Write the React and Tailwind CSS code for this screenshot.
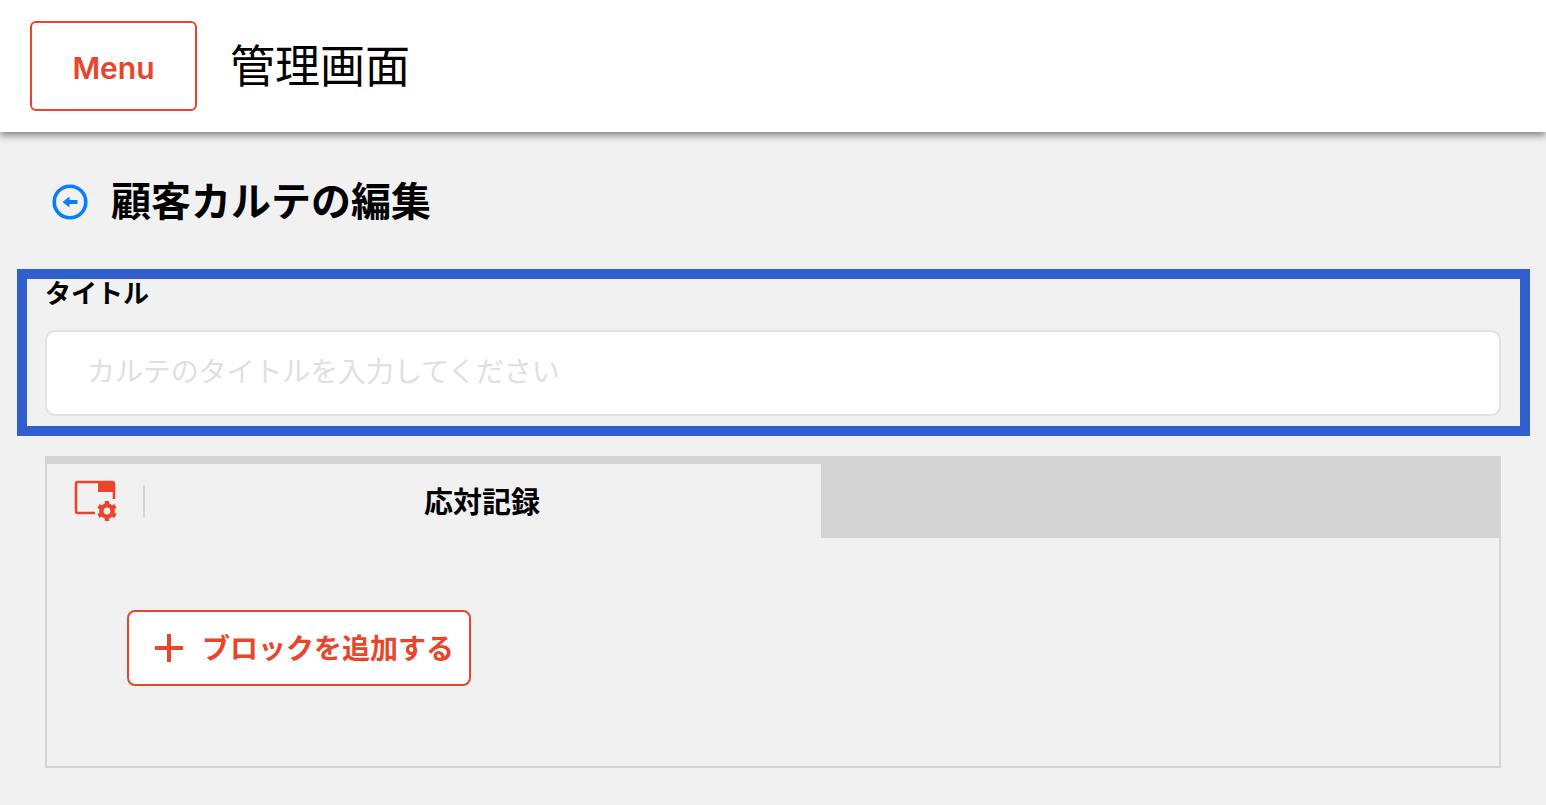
export default function App() {
  const jp = { fontFamily: '"Inter","Noto Sans CJK JP",sans-serif' };
  return (
    <div className="h-[805px] overflow-hidden bg-[#f1f1f1] text-black" style={jp}>
      <header className="relative flex h-[132px] items-center bg-white pl-[30px] shadow-[0_3px_8px_rgba(0,0,0,0.5)]">
        <button className="flex h-[90px] w-[167px] items-center justify-center rounded-[6px] border-2 border-[#e8452c] bg-white pt-[4px] text-[30px] font-semibold text-[#e8452c]">Menu</button>
        <h1 className="ml-[33px] text-[45px] font-normal leading-none">管理画面</h1>
      </header>
      <div className="flex h-[137px] items-center pl-[52px]">
        <svg width="36" height="36" viewBox="0 0 36 36" fill="none" className="mt-[2px] shrink-0">
          <circle cx="18" cy="18" r="15.8" stroke="#0a7cff" strokeWidth="3.6" />
          <path d="M10.5 18 L17.5 12.5 V16 H25.5 V20 H17.5 V23.5 Z" fill="#0a7cff" />
        </svg>
        <h2 className="ml-[23px] pt-[2px] text-[40px] font-bold leading-none">顧客カルテの編集</h2>
      </div>
      <section className="ml-[17px] h-[167px] w-[1513px] border-[10px] border-[#3160cc] pl-[18px] pr-[19px]">
        <label className="block text-[26px] font-bold leading-[30px]">タイトル</label>
        <div className="mt-[21px] flex h-[86px] items-center rounded-[10px] border-2 border-[#e2e2e2] bg-white pb-[2px] pl-[40px] text-[28px] tracking-[-0.1px] text-[#e0e0e0]">カルテのタイトルを入力してください</div>
      </section>
      <section className="ml-[45px] mt-[20px] h-[312px] w-[1456px] border-2 border-[#d4d4d4]">
        <div className="flex h-[80px] items-end bg-[#d4d4d4]">
          <div className="flex h-[74px] w-[774px] items-center bg-[#f1f1f1]">
            <svg width="44" height="44" viewBox="0 0 44 44" fill="none" className="ml-[27px] mb-[1px] shrink-0">
              <path d="M21 34 H4 a2 2 0 0 1 -2 -2 V5 a2 2 0 0 1 2 -2 H38 a2 2 0 0 1 2 2 V20" stroke="#e8452c" strokeWidth="2.6" />
              <path d="M24 3 H38 a2 2 0 0 1 2 2 V13 H24 Z" fill="#e8452c" />
              <circle cx="33" cy="32" r="5.6" stroke="#e8452c" strokeWidth="4.4" />
              <path d="M33 22 V26 M33 38 V42 M24.5 27 L28 29 M38 35 L41.5 37 M24.5 37 L28 35 M38 29 L41.5 27" stroke="#e8452c" strokeWidth="4.4" />
            </svg>
            <div className="ml-[25px] h-[32px] w-[2px] bg-[#d4d4d4]" />
            <div className="flex-1 pr-[2px] pt-[2px] text-center text-[29px] font-bold leading-none">応対記録</div>
          </div>
        </div>
        <button className="ml-[80px] mt-[72px] flex h-[76px] w-[344px] items-center rounded-[8px] border-2 border-[#e8452c] bg-white pl-[26px] text-[#e8452c]">
          <svg width="28" height="28" viewBox="0 0 28 28" className="shrink-0">
            <path d="M14 0 V28 M0 14 H28" stroke="#e8452c" strokeWidth="4" />
          </svg>
          <span className="ml-[19px] whitespace-nowrap pt-[1px] text-[28px] font-bold leading-none">ブロックを追加する</span>
        </button>
      </section>
    </div>
  );
}
